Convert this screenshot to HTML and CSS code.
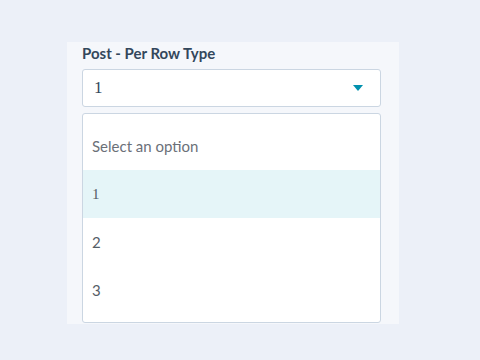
FILE: index.html
```html
<!DOCTYPE html>
<html lang="en">
<head>
  <meta charset="UTF-8">
  <title>Post - Per Row Type</title>
  <link rel="stylesheet" href="styles.css">
</head>
<body>
  <div class="panel">
    <label class="field-label">Post - Per Row Type</label>
    <div class="select">
      <span class="select-value">1</span>
      <svg class="caret" width="10" height="6" viewBox="0 0 10 6"><path d="M0 0h10L5 6z" fill="#0091ae"/></svg>
    </div>
    <ul class="options">
      <li class="placeholder">Select an option</li>
      <li class="active num-serif">1</li>
      <li>2</li>
      <li>3</li>
    </ul>
  </div>
</body>
</html>
```

FILE: styles.css
```css
* { box-sizing: border-box; margin: 0; padding: 0; }
body { background: #ecf0f8; font-family: Lato, 'Noto Sans', sans-serif; width: 480px; height: 360px; overflow: hidden; }
.panel { margin: 42px 0 0 67px; width: 332px; height: 282px; background: #f5f7fb; padding: 2px 0 0 15px; overflow: hidden; }
.field-label { display: block; font-weight: 700; font-size: 15px; color: #33475b; line-height: 18px; margin-bottom: 7px; }
.select { width: 299px; height: 38px; background: #fff; border: 1px solid #cbd6e2; border-radius: 3px; display: flex; align-items: center; justify-content: space-between; padding: 0 17px 0 11px; }
.select-value { font-family: 'Liberation Serif', serif; font-size: 17px; color: #33475b; }
.options { list-style: none; width: 299px; margin-top: 6px; background: #fff; border: 1px solid #cbd6e2; border-radius: 3px; padding-top: 8px; height: 210px; }
.options li { height: 48px; line-height: 48px; padding-left: 9px; font-size: 15px; color: #555d66; }
.options li.placeholder { color: #6b7078; }
.options li.active { background: #e5f5f8; }
.num-serif { font-family: 'Liberation Serif', serif; }
```
